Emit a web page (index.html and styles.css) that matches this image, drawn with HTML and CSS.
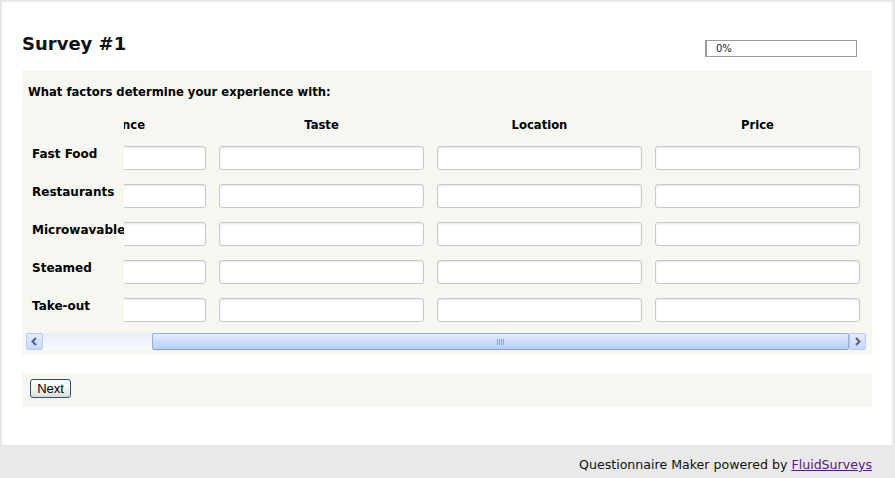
FILE: index.html
```html
<!DOCTYPE html>
<html lang="en">
<head>
<meta charset="utf-8">
<title>Survey #1</title>
<link rel="stylesheet" href="styles.css">
</head>
<body>
<div class="page">
  <div class="head">
    <h1 class="title">Survey #1</h1>
    <div class="progress">0%</div>
  </div>
  <div class="question">
    <div class="q-text">What factors determine your experience with:</div>
    <div class="matrix">
      <div class="labels">
        <div class="label-head"></div>
        <div class="label">Fast Food</div>
        <div class="label">Restaurants</div>
        <div class="label">Microwavable</div>
        <div class="label">Steamed</div>
        <div class="label">Take-out</div>
      </div>
      <div class="viewport">
        <div class="track">
          <div class="col-head">Convenience</div>
          <div class="col-head">Taste</div>
          <div class="col-head">Location</div>
          <div class="col-head">Price</div>
          <div class="cell"><input class="field" type="text"></div>
          <div class="cell"><input class="field" type="text"></div>
          <div class="cell"><input class="field" type="text"></div>
          <div class="cell"><input class="field" type="text"></div>
          <div class="cell"><input class="field" type="text"></div>
          <div class="cell"><input class="field" type="text"></div>
          <div class="cell"><input class="field" type="text"></div>
          <div class="cell"><input class="field" type="text"></div>
          <div class="cell"><input class="field" type="text"></div>
          <div class="cell"><input class="field" type="text"></div>
          <div class="cell"><input class="field" type="text"></div>
          <div class="cell"><input class="field" type="text"></div>
          <div class="cell"><input class="field" type="text"></div>
          <div class="cell"><input class="field" type="text"></div>
          <div class="cell"><input class="field" type="text"></div>
          <div class="cell"><input class="field" type="text"></div>
          <div class="cell"><input class="field" type="text"></div>
          <div class="cell"><input class="field" type="text"></div>
          <div class="cell"><input class="field" type="text"></div>
          <div class="cell"><input class="field" type="text"></div>
        </div>
      </div>
    </div>
    <div class="scrollbar">
      <div class="sb-btn"><svg width="15" height="15" viewBox="0 0 15 15"><path d="M9 4 L5.5 7.5 L9 11" fill="none" stroke="#4d6185" stroke-width="2"/></svg></div>
      <div class="sb-track"><div class="sb-thumb"><span class="grip"></span></div></div>
      <div class="sb-btn"><svg width="15" height="15" viewBox="0 0 15 15"><path d="M6 4 L9.5 7.5 L6 11" fill="none" stroke="#4d6185" stroke-width="2"/></svg></div>
    </div>
  </div>
  <div class="nav">
    <button class="next" type="button">Next</button>
  </div>
</div>
<div class="footer">Questionnaire Maker powered by <a class="brand" href="#">FluidSurveys</a></div>
</body>
</html>
```
FILE: styles.css
```css
html, body {
  margin: 0;
  padding: 0;
}
body {
  background: #e9e9e9;
  font-family: "DejaVu Sans", Verdana, sans-serif;
  color: #000;
  height: 478px;
  overflow: hidden;
}
.page {
  margin: 2px 3px 0 2px;
  background: #fff;
  height: 443px;
  box-sizing: border-box;
  padding: 31px 20px 0 20px;
}
.head {
  display: flex;
  justify-content: space-between;
  align-items: flex-start;
  height: 37px;
}
.title {
  margin: 0;
  font-size: 18px;
  line-height: 22px;
  font-weight: bold;
  color: #111;
}
.progress {
  margin: 7px 15px 0 0;
  width: 152px;
  height: 17px;
  box-sizing: border-box;
  border: 1px solid #9a9a9a;
  border-left-width: 2px;
  font-size: 10px;
  line-height: 15px;
  padding-left: 9px;
  color: #222;
}
.question {
  background: #f7f7f2;
  padding: 15px 6px 5px 4px;
}
.q-text {
  font-size: 11.6px;
  line-height: 14px;
  font-weight: bold;
  padding-left: 2px;
}
.matrix {
  display: flex;
  margin-top: 18px;
}
.labels {
  flex: none;
  width: 98px;
  background: #f7f7f2;
}
.label-head {
  height: 23px;
}
.label {
  height: 38px;
  box-sizing: border-box;
  padding: 7px 0 0 6px;
  font-size: 12px;
  line-height: 14px;
  font-weight: bold;
  white-space: nowrap;
  overflow: hidden;
}
.viewport {
  flex: 1;
  overflow: hidden;
}
.track {
  margin-left: -123px;
  display: grid;
  grid-template-columns: repeat(4, 205px);
  grid-template-rows: 23px repeat(5, 38px);
  column-gap: 13px;
  width: 900px;
}
.col-head {
  padding-top: 1px;
  text-align: center;
  font-size: 11.6px;
  line-height: 14px;
  font-weight: bold;
}
.cell {
  padding-top: 6px;
}
.field {
  display: block;
  width: 205px;
  height: 24px;
  box-sizing: border-box;
  margin: 0;
  border: 1px solid #c9c9c9;
  border-radius: 3px;
  background: #fff;
  box-shadow: inset 0 1px 2px #e6e6e6;
  padding: 0 4px;
  font-size: 12px;
}
.scrollbar {
  display: flex;
  height: 17px;
  margin-top: 3px;
}
.sb-btn {
  flex: none;
  width: 17px;
  height: 17px;
  box-sizing: border-box;
  border: 1px solid #b7c9ee;
  border-radius: 2px;
  background: linear-gradient(#e3ecfe, #c7d8fa);
  display: flex;
  align-items: center;
  justify-content: center;
}
.sb-track {
  flex: 1;
  display: flex;
  padding-left: 109px;
  background: linear-gradient(#e8effc, #f8fafe);
}
.sb-thumb {
  flex: 1;
  box-sizing: border-box;
  border: 1px solid #98afd8;
  border-bottom-color: #8a9ec6;
  border-radius: 2px;
  background: linear-gradient(#e3edfe, #c9dbfa 55%, #b9cff4);
  display: flex;
  align-items: center;
  justify-content: center;
}
.grip {
  width: 7px;
  height: 6px;
  background: repeating-linear-gradient(90deg, #8aa2cc 0 1px, transparent 1px 2px);
}
.nav {
  margin-top: 18px;
  background: #f7f7f2;
  height: 34px;
  box-sizing: border-box;
  padding: 6px 8px 0;
}
.next {
  display: block;
  width: 41px;
  height: 19px;
  box-sizing: border-box;
  margin: 0;
  padding: 0;
  border: 1px solid #2a4f8c;
  border-radius: 3px;
  background: linear-gradient(#ffffff, #f1f1ec 60%, #dcdbd2);
  font-family: "Liberation Sans", Arial, sans-serif;
  font-size: 13px;
  line-height: 17px;
  color: #000;
}
.footer {
  height: 33px;
  box-sizing: border-box;
  padding: 12px 23px 0 0;
  text-align: right;
  font-size: 12.6px;
  line-height: 15px;
  color: #111;
}
.brand {
  color: #551a8b;
  text-decoration: underline;
}
```
